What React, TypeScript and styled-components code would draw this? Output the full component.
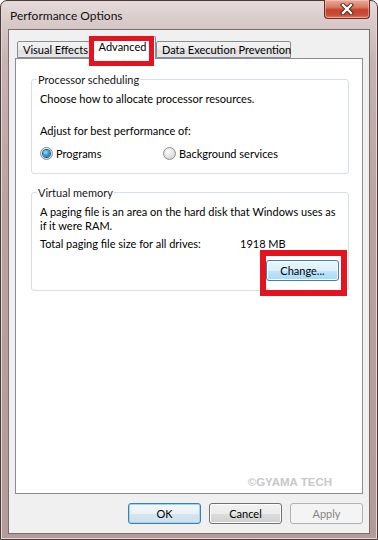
import styled, { createGlobalStyle } from 'styled-components';

const GlobalStyle = createGlobalStyle`
  html, body {
    margin: 0;
    padding: 0;
  }
  body {
    width: 378px;
    height: 540px;
    overflow: hidden;
    background: #ffffff;
    font-family: Lato, "Liberation Sans", sans-serif;
    font-size: 11px;
    color: #000;
  }
`;

const Window = styled.div`
  width: 378px;
  height: 540px;
  box-sizing: border-box;
  display: flex;
  flex-direction: column;
  padding: 0 7px 5px 7px;
  border: 1px solid #4d3938;
  border-radius: 7px 7px 0 0;
  box-shadow: inset 0 0 0 1px #e4d9d8;
  background: linear-gradient(180deg, #e6dcdb 0%, #d8cbca 20px, #c6b4b2 60px, #b9a4a1 200px, #b29b98 100%);
`;

const TitleBar = styled.div`
  height: 28px;
  flex: none;
  display: flex;
  justify-content: space-between;
  align-items: flex-start;
  padding-left: 2px;
`;

const Title = styled.div`
  margin-top: 7px;
  font-size: 12px;
  color: #111;
`;

const CloseButton = styled.div`
  width: 46px;
  height: 19px;
  box-sizing: border-box;
  margin-top: -1px;
  display: flex;
  align-items: center;
  justify-content: center;
  border: 1px solid #6b2c22;
  border-top: none;
  border-radius: 0 0 4px 4px;
  background: linear-gradient(180deg, #e9ab9a 0%, #d87a64 40%, #c5412a 55%, #c9503a 85%, #e0826c 100%);
  box-shadow: inset 0 0 0 1px rgba(255, 220, 210, 0.45);
`;

const Client = styled.div`
  flex: 1;
  display: flex;
  flex-direction: column;
  background: #f0f0f0;
  border: 1px solid #7d6c6b;
  padding: 6px 6px 9px 6px;
`;

const TabRow = styled.div`
  display: flex;
  align-items: flex-end;
  height: 22px;
  padding-left: 2px;
  position: relative;
  z-index: 1;
`;

const Tab = styled.div<{ $active?: boolean; $width: number }>`
  position: relative;
  box-sizing: border-box;
  width: ${p => p.$width}px;
  height: ${p => (p.$active ? 23 : 17)}px;
  margin-bottom: ${p => (p.$active ? -1 : 0)}px;
  padding: ${p => (p.$active ? '3px 0 0 0' : '1px 0 0 5px')};
  text-align: ${p => (p.$active ? 'center' : 'left')};
  border: 1px solid #898c95;
  border-bottom: ${p => (p.$active ? 'none' : '1px solid #898c95')};
  margin-left: ${p => (p.$active ? -1 : 0)}px;
  border-radius: 2px 2px 0 0;
  background: ${p => (p.$active ? '#ffffff' : 'linear-gradient(180deg, #f3f3f3 0%, #ebebeb 50%, #dddddd 51%, #e6e6e6 100%)')};
  line-height: 14px;
  white-space: nowrap;
`;

const HighlightAdvanced = styled.span`
  position: absolute;
  left: -1px;
  top: -1px;
  width: 65px;
  height: 30px;
  box-sizing: border-box;
  border: 5px solid #e3141f;
  pointer-events: none;
`;

const Panel = styled.div`
  flex: 1;
  display: flex;
  flex-direction: column;
  background: #ffffff;
  border: 1px solid #898c95;
  padding: 13px 13px 4px 15px;
`;

const GroupBox = styled.fieldset<{ $gap?: number }>`
  margin: ${p => p.$gap ?? 0}px 0 0 0;
  padding: 0 9px 0 8px;
  border: 1px solid #d5dfe5;
  border-radius: 3px;
  min-width: 0;
`;

const Legend = styled.legend`
  margin-left: -3px;
  padding: 0 1px;
  line-height: 15px;
  color: #151515;
`;

const Line = styled.div<{ $top?: number; $height?: number }>`
  margin-top: ${p => p.$top ?? 0}px;
  line-height: ${p => p.$height ?? 15}px;
`;

const RadioRow = styled.div`
  display: flex;
  align-items: center;
  margin-top: 8px;
  margin-bottom: 12px;
  height: 15px;
`;

const RadioOption = styled.label<{ $width?: number }>`
  display: flex;
  align-items: center;
  gap: 3px;
  width: ${p => (p.$width ? `${p.$width}px` : 'auto')};
`;

const RadioDot = styled.span<{ $checked?: boolean }>`
  width: 13px;
  height: 13px;
  box-sizing: border-box;
  border-radius: 50%;
  border: 1px solid #8e8f8f;
  background: radial-gradient(circle at 40% 35%, #ffffff 0%, #e6e6e6 45%, #c9c9c9 100%);
  display: flex;
  align-items: center;
  justify-content: center;
  &::after {
    content: '';
    display: ${p => (p.$checked ? 'block' : 'none')};
    width: 7px;
    height: 7px;
    border-radius: 50%;
    background: radial-gradient(circle at 40% 35%, #9be1fb 0%, #2a9ad6 50%, #0a4f8a 100%);
    box-shadow: 0 0 0 1px #1e5a86;
  }
`;

const SizeRow = styled.div`
  display: grid;
  grid-template-columns: 200px auto;
  line-height: 15px;
  margin-top: 3px;
`;

const ButtonEnd = styled.div<{ $top?: number; $bottom?: number; $gap?: number }>`
  display: flex;
  justify-content: flex-end;
  gap: ${p => p.$gap ?? 0}px;
  margin-top: ${p => p.$top ?? 0}px;
  margin-bottom: ${p => p.$bottom ?? 0}px;
`;

const Button = styled.button<{ $variant?: 'default' | 'hot' | 'disabled' }>`
  position: relative;
  width: 73px;
  height: 21px;
  box-sizing: border-box;
  padding: 0;
  font-family: inherit;
  font-size: 11px;
  font-weight: normal;
  line-height: 18px;
  border-radius: 3px;
  border: 1px solid
    ${p => (p.$variant === 'default' ? '#3c7fb1' : p.$variant === 'hot' ? '#3c7fb1' : p.$variant === 'disabled' ? '#adb2b5' : '#707070')};
  color: ${p => (p.$variant === 'disabled' ? '#838383' : '#000')};
  background: ${p =>
    p.$variant === 'hot'
      ? 'linear-gradient(180deg, #eaf6fd 0%, #d9f0fc 50%, #bee6fd 51%, #a7d9f5 100%)'
      : p.$variant === 'disabled'
        ? '#f4f4f4'
        : p.$variant === 'default'
          ? 'linear-gradient(180deg, #f4f8fb 0%, #e9f1f7 50%, #d6e5f0 51%, #cfe0ec 100%)'
          : 'linear-gradient(180deg, #f2f2f2 0%, #ebebeb 50%, #dddddd 51%, #cfcfcf 100%)'};
  box-shadow: ${p =>
    p.$variant === 'default' ? 'inset 0 0 0 1px #9fd5f4' : p.$variant === 'disabled' ? 'none' : 'inset 0 0 0 1px #fcfcfc'};
`;

const HighlightChange = styled.span`
  position: absolute;
  left: -7px;
  top: -11px;
  width: 87px;
  height: 46px;
  box-sizing: border-box;
  border: 6px solid #e3141f;
  pointer-events: none;
`;

const Watermark = styled.div`
  margin-top: auto;
  align-self: flex-end;
  margin-right: 17px;
  font-family: "Liberation Sans", Arial, sans-serif;
  font-weight: bold;
  font-size: 11.5px;
  color: #c8c8c8;
  line-height: 14px;
`;

export default function App() {
  return (
    <>
      <GlobalStyle />
      <Window>
        <TitleBar>
          <Title>Performance Options</Title>
          <CloseButton>
            <svg width="14" height="12" viewBox="0 0 14 12">
              <path d="M3 2 L11 10 M11 2 L3 10" stroke="#4a1e16" strokeWidth="4.2" strokeLinecap="square" />
              <path d="M3 2 L11 10 M11 2 L3 10" stroke="#ffffff" strokeWidth="2.4" strokeLinecap="square" />
            </svg>
          </CloseButton>
        </TitleBar>
        <Client>
          <TabRow>
            <Tab $width={73}>Visual Effects</Tab>
            <Tab $active $width={67}>
              Advanced
              <HighlightAdvanced />
            </Tab>
            <Tab $width={135}>Data Execution Prevention</Tab>
          </TabRow>
          <Panel>
            <GroupBox>
              <Legend>Processor scheduling</Legend>
              <Line $top={4}>Choose how to allocate processor resources.</Line>
              <Line $top={17}>Adjust for best performance of:</Line>
              <RadioRow>
                <RadioOption $width={123}>
                  <RadioDot $checked />
                  Programs
                </RadioOption>
                <RadioOption>
                  <RadioDot />
                  Background services
                </RadioOption>
              </RadioRow>
            </GroupBox>
            <GroupBox $gap={11}>
              <Legend>Virtual memory</Legend>
              <Line $top={5} $height={14}>
                A paging file is an area on the hard disk that Windows uses as
                <br />
                if it were RAM.
              </Line>
              <SizeRow>
                <span>Total paging file size for all drives:</span>
                <span>1918 MB</span>
              </SizeRow>
              <ButtonEnd $top={9} $bottom={9}>
                <Button $variant="hot">
                  Change...
                  <HighlightChange />
                </Button>
              </ButtonEnd>
            </GroupBox>
            <Watermark>©GYAMA TECH</Watermark>
          </Panel>
          <ButtonEnd $top={9} $gap={8}>
            <Button $variant="default">OK</Button>
            <Button>Cancel</Button>
            <Button $variant="disabled">Apply</Button>
          </ButtonEnd>
        </Client>
      </Window>
    </>
  );
}
